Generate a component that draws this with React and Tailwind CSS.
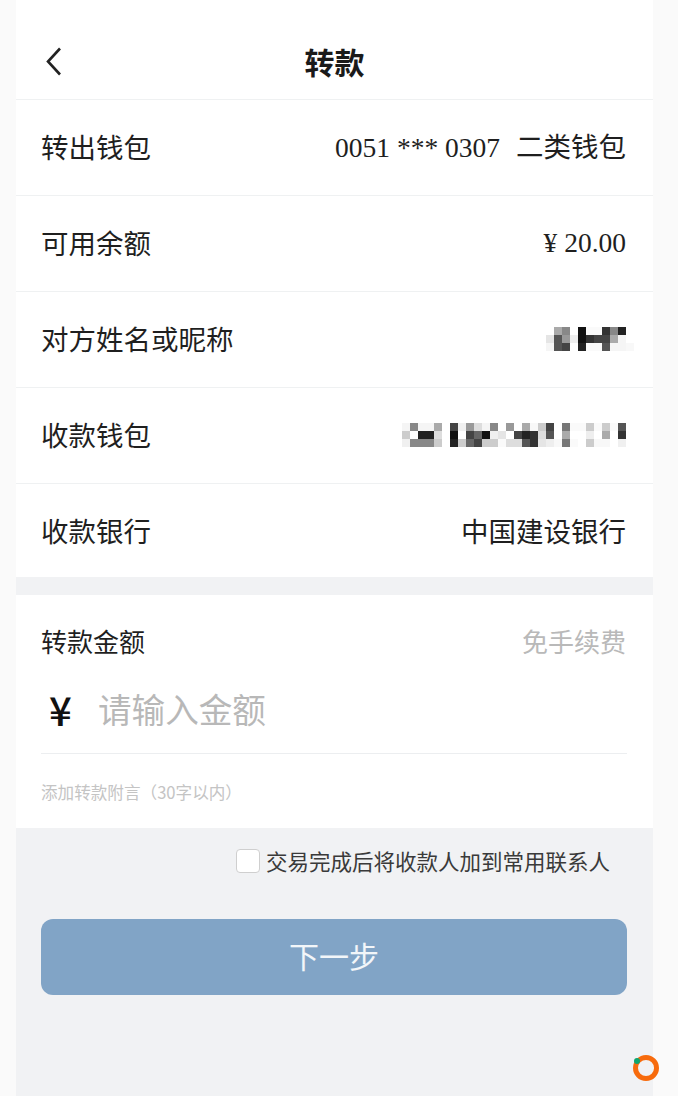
import React from 'react';

const SANS = 'font-["Noto_Sans_CJK_SC","Noto_Sans",sans-serif]';

// Masked names, one string of grey levels per row of blocks
const NAME_MASK = [
  ['#fff', '#aaa', '#888', '#fff', '#111', '#fafafa', '#fafafa', '#333', '#888', '#222', '#fff'],
  ['#e5e5e5', '#555', '#999', '#eee', '#111', '#333', '#444', '#444', '#aaa', '#f5f5f5', '#fff'],
  ['#f5f5f5', '#555', '#444', '#fff', '#222', '#fafafa', '#fafafa', '#555', '#f5f5f5', '#f5f5f5', '#f8f8f8'],
];

const WALLET_MASK = [
  ['#f5f5f5', '#888', '#f5f5f5', '#f5f5f5', '#aaa', '#fff', '#444', '#f0f0f0', '#999', '#ddd', '#f5f5f5', '#888', '#fff', '#999', '#fff', '#aaa', '#f8f8f8', '#ccc', '#444', '#fff', '#777', '#fafafa', '#fafafa', '#ccc', '#fafafa', '#ccc', '#fafafa', '#555'],
  ['#ccc', '#fff', '#222', '#222', '#ddd', '#fff', '#111', '#fff', '#444', '#666', '#111', '#f0f0f0', '#e5e5e5', '#fff', '#444', '#222', '#333', '#ddd', '#555', '#fff', '#aaa', '#fff', '#fff', '#eee', '#fff', '#aaa', '#fff', '#333'],
  ['#f0f0f0', '#888', '#888', '#888', '#ccc', '#fff', '#222', '#ccc', '#666', '#444', '#ccc', '#ccc', '#fafafa', '#ddd', '#ddd', '#555', '#333', '#e5e5e5', '#eee', '#f8f8f8', '#777', '#fafafa', '#fff', '#ccc', '#f8f8f8', '#f8f8f8', '#fff', '#f0f0f0'],
];

const Mosaic = ({ rows }) => (
  <svg width={rows[0].length * 8} height={24} className="block">
    {rows.map((row, y) =>
      row.map((fill, x) => <rect key={x} x={x * 8} y={y * 8} width={8} height={8} fill={fill} />)
    )}
  </svg>
);

const Row = ({ label, children, last }) => (
  <div className={`h-24 pl-[25px] pr-[27px] pb-[2px] flex items-center justify-between ${last ? '' : 'border-b border-[#eff1f2]'}`}>
    <span className="text-[27.5px] text-[#1f1f1f]">{label}</span>
    {children}
  </div>
);

const App = () => {
  return (
    <div className={`relative h-[1096px] overflow-hidden bg-[#fafafa] pl-4 pr-[25px] ${SANS}`}>
      <div className="h-full bg-[#f1f2f4] flex flex-col">
        {/* Nav bar */}
        <header className="relative h-[100px] shrink-0 bg-white border-b border-[#eff1f2] flex items-center justify-center pt-[23px]">
          <svg className="absolute left-[30px] top-[47px]" width="16" height="29" viewBox="0 0 16 29" fill="none">
            <path d="M14 1.5 L2 14.5 L14 27.5" stroke="#222" strokeWidth="2.6" />
          </svg>
          <h1 className="text-[30px] font-bold text-[#1a1a1a]">转款</h1>
        </header>

        {/* Wallet details */}
        <section className="bg-white shrink-0 h-[477px] overflow-hidden">
          <Row label="转出钱包">
            <span className="text-[27.5px] text-[#1f1f1f]">
              <span className='font-["Liberation_Serif",serif]'>0051 *** 0307</span>
              <span className="ml-4">二类钱包</span>
            </span>
          </Row>
          <Row label="可用余额">
            <span className='text-[27.5px] text-[#1f1f1f] font-["Liberation_Serif",serif]'>¥ 20.00</span>
          </Row>
          <Row label="对方姓名或昵称">
            <div className="mr-[-8px]">
              <Mosaic rows={NAME_MASK} />
            </div>
          </Row>
          <Row label="收款钱包">
            <Mosaic rows={WALLET_MASK} />
          </Row>
          <Row label="收款银行" last>
            <span className="text-[27.5px] text-[#1f1f1f]">中国建设银行</span>
          </Row>
        </section>

        {/* Amount form */}
        <section className="mt-[18px] h-[233px] shrink-0 bg-white pl-[25px] pr-[26px] pt-[20px]">
          <div className="flex items-center justify-between h-[50px] pr-px">
            <span className="text-[26px] text-[#1f1f1f]">转款金额</span>
            <span className="text-[26px] text-[#b9b9b9]">免手续费</span>
          </div>
          <div className="flex items-center h-[89px] border-b border-[#eceef0]">
            <span className="w-[57px] pl-[8px] text-[40px] font-medium text-[#111]">¥</span>
            <input
              placeholder="请输入金额"
              className="flex-1 min-w-0 text-[33.6px] bg-transparent outline-none placeholder:text-[#b8b8b8]"
            />
          </div>
          <p className="mt-[25px] text-[16.6px] leading-[26px] text-[#c4c4c4]">添加转款附言（30字以内）</p>
        </section>

        {/* Contact opt-in and submit */}
        <label className="mt-[21px] flex items-center justify-end pr-[43px] gap-[6px]">
          <span className="w-6 h-6 bg-white border border-[#cfcfcf] rounded-[4px]" />
          <span className="text-[21.5px] leading-6 text-[#3a3a3a]">交易完成后将收款人加到常用联系人</span>
        </label>
        <button className="mt-[46px] ml-[25px] mr-[26px] h-[76px] pb-[3px] rounded-xl bg-[#81a4c6] text-[30px] text-white/90">下一步</button>
      </div>

      {/* Floating assistant badge */}
      <div className="absolute left-[633px] top-[1055px] w-[26px] h-[26px] rounded-full border-[5px] border-[#f76b0d]">
        <span className="absolute -left-[4px] -top-[2px] w-[6px] h-[6px] rounded-full bg-[#0ea66f]" />
      </div>
    </div>
  );
};

export default App;
